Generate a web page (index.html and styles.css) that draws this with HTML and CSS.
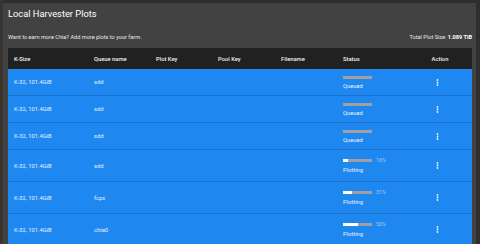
FILE: index.html
```html
<!DOCTYPE html>
<html>
<head>
<meta charset="utf-8">
<link rel="stylesheet" href="styles.css">
</head>
<body>
<div class="page">
  <div class="panel">
    <h1 class="title">Local Harvester Plots</h1>
    <div class="meta">
      <span class="sub">Want to earn more Chia? Add more plots to your farm.</span>
      <span class="total">Total Plot Size: <b>1.089 TiB</b></span>
    </div>
    <div class="table">
      <div class="row head">
        <div class="c">K-Size</div>
        <div class="c">Queue name</div>
        <div class="c">Plot Key</div>
        <div class="c">Pool Key</div>
        <div class="c">Filename</div>
        <div class="c">Status</div>
        <div class="c act">Action</div>
      </div>

      <div class="row q">
        <div class="c">K-32, 101.4GiB</div>
        <div class="c">sdd</div>
        <div class="c"></div><div class="c"></div><div class="c"></div>
        <div class="c status"><div class="bar"><div class="track"></div></div><div class="st">Queued</div></div>
        <div class="c act"><svg class="dots" width="3" height="7" viewBox="0 0 3 7"><circle cx="1.5" cy="1" r="0.9"/><circle cx="1.5" cy="3.5" r="0.9"/><circle cx="1.5" cy="6" r="0.9"/></svg></div>
      </div>

      <div class="row q">
        <div class="c">K-32, 101.4GiB</div>
        <div class="c">sdd</div>
        <div class="c"></div><div class="c"></div><div class="c"></div>
        <div class="c status"><div class="bar"><div class="track"></div></div><div class="st">Queued</div></div>
        <div class="c act"><svg class="dots" width="3" height="7" viewBox="0 0 3 7"><circle cx="1.5" cy="1" r="0.9"/><circle cx="1.5" cy="3.5" r="0.9"/><circle cx="1.5" cy="6" r="0.9"/></svg></div>
      </div>

      <div class="row q">
        <div class="c">K-32, 101.4GiB</div>
        <div class="c">sdd</div>
        <div class="c"></div><div class="c"></div><div class="c"></div>
        <div class="c status"><div class="bar"><div class="track"></div></div><div class="st">Queued</div></div>
        <div class="c act"><svg class="dots" width="3" height="7" viewBox="0 0 3 7"><circle cx="1.5" cy="1" r="0.9"/><circle cx="1.5" cy="3.5" r="0.9"/><circle cx="1.5" cy="6" r="0.9"/></svg></div>
      </div>

      <div class="row p">
        <div class="c">K-32, 101.4GiB</div>
        <div class="c">sdd</div>
        <div class="c"></div><div class="c"></div><div class="c"></div>
        <div class="c status"><div class="bar"><div class="track"><div class="fill" style="width:16%"></div></div><span class="pct">16%</span></div><div class="st">Plotting</div></div>
        <div class="c act"><svg class="dots" width="3" height="7" viewBox="0 0 3 7"><circle cx="1.5" cy="1" r="0.9"/><circle cx="1.5" cy="3.5" r="0.9"/><circle cx="1.5" cy="6" r="0.9"/></svg></div>
      </div>

      <div class="row p">
        <div class="c">K-32, 101.4GiB</div>
        <div class="c">fcpx</div>
        <div class="c"></div><div class="c"></div><div class="c"></div>
        <div class="c status"><div class="bar"><div class="track"><div class="fill" style="width:31%"></div></div><span class="pct">31%</span></div><div class="st">Plotting</div></div>
        <div class="c act"><svg class="dots" width="3" height="7" viewBox="0 0 3 7"><circle cx="1.5" cy="1" r="0.9"/><circle cx="1.5" cy="3.5" r="0.9"/><circle cx="1.5" cy="6" r="0.9"/></svg></div>
      </div>

      <div class="row p">
        <div class="c">K-32, 101.4GiB</div>
        <div class="c">chia0</div>
        <div class="c"></div><div class="c"></div><div class="c"></div>
        <div class="c status"><div class="bar"><div class="track"><div class="fill" style="width:50%"></div></div><span class="pct">50%</span></div><div class="st">Plotting</div></div>
        <div class="c act"><svg class="dots" width="3" height="7" viewBox="0 0 3 7"><circle cx="1.5" cy="1" r="0.9"/><circle cx="1.5" cy="3.5" r="0.9"/><circle cx="1.5" cy="6" r="0.9"/></svg></div>
      </div>
    </div>
  </div>
</div>
</body>
</html>
```

FILE: styles.css
```css
html, body {
  margin: 0;
  padding: 0;
  width: 480px;
  height: 244px;
  overflow: hidden;
  background: #2b2b2b;
  font-family: Roboto, "Liberation Sans", sans-serif;
  color: #fff;
}
.page {
  padding: 3px 4px 0 3px;
  height: 241px;
  background: linear-gradient(to right, #3a3430 0, #3a3430 3px, #2e2e2e 3px);
}
.panel {
  background: #424242;
  height: 100%;
  padding: 0 4px 0 5px;
  overflow: hidden;
}
.title {
  margin: 0;
  padding-top: 5px;
  font-size: 9.3px;
  font-weight: 400;
  line-height: 12px;
  color: #fff;
}
.meta {
  display: flex;
  justify-content: space-between;
  align-items: center;
  margin-top: 13px;
  font-size: 5.6px;
  line-height: 8px;
  color: #e8e8e8;
}
.total b { font-weight: 700; color: #fff; }
.table {
  margin-top: 7px;
}
.row {
  display: grid;
  grid-template-columns: 80px 62px 62px 63px 62px 1fr 64px;
  align-items: center;
  font-size: 5.8px;
}
.head {
  background: #212121;
  height: 21px;
  font-weight: 500;
  color: #f0f0f0;
}
.row.q, .row.p {
  background: #1f88f0;
  border-bottom: 1px solid #1a72cc;
  color: #e6f1fd;
}
.row.q { height: 26px; }
.row.p { height: 31px; }
.c { padding-left: 6px; }
.act { padding-left: 0; text-align: center; }
.row .act { padding-right: 5px; display: flex; justify-content: center; }
.head .act { display: block; padding-right: 0; }
.dots { fill: #eaf4ff; display: block; }
.bar {
  display: flex;
  align-items: center;
  height: 6px;
}
.track {
  width: 29px;
  height: 3px;
  background: #a0a0a0;
  position: relative;
}
.fill {
  height: 100%;
  background: #fff;
}
.pct {
  margin-left: 4px;
  font-size: 5.4px;
  color: #9ecbf7;
}
.st {
  margin-top: 3px;
  line-height: 7px;
}
.row.p .st { margin-top: 4px; }
```
